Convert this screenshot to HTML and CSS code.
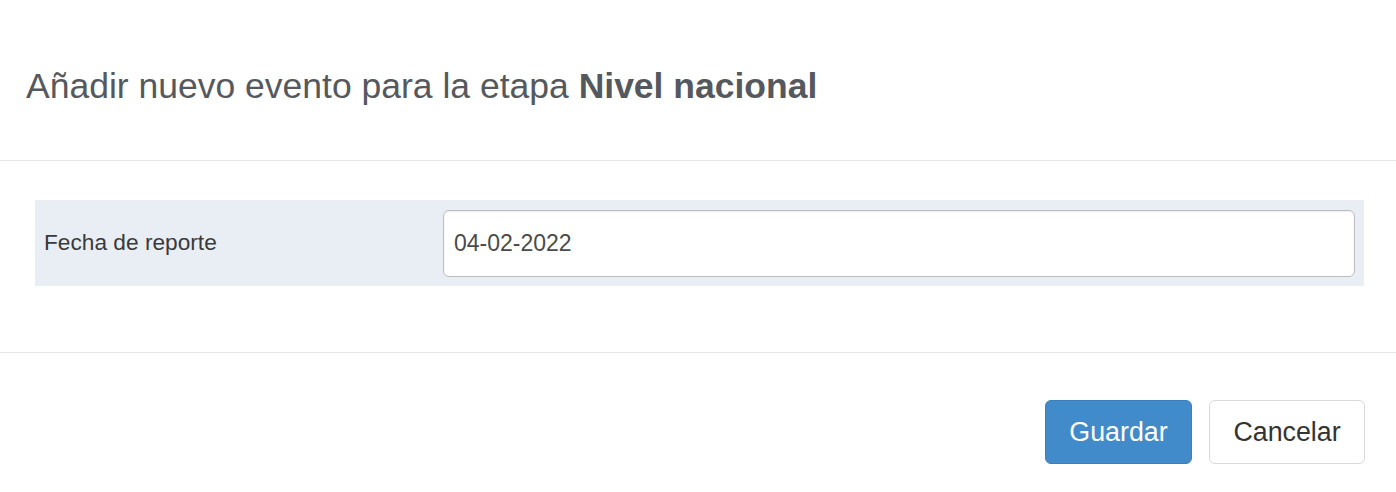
FILE: index.html
```html
<!DOCTYPE html>
<html lang="es">
<head>
<meta charset="utf-8">
<title>Añadir nuevo evento</title>
<link rel="stylesheet" href="styles.css">
</head>
<body>
<div class="modal">
  <div class="modal-header">
    <h4 class="modal-title">Añadir nuevo evento para la etapa <strong>Nivel nacional</strong></h4>
  </div>
  <div class="modal-body">
    <div class="form-row">
      <label class="form-label" for="fecha">Fecha de reporte</label>
      <div class="form-field">
        <input id="fecha" class="form-input" type="text" value="04-02-2022">
      </div>
    </div>
  </div>
  <div class="modal-footer">
    <button class="btn btn-primary" type="button">Guardar</button>
    <button class="btn btn-default" type="button">Cancelar</button>
  </div>
</div>
</body>
</html>
```
FILE: styles.css
```css
* { box-sizing: border-box; }
html, body { margin: 0; padding: 0; background: #fff; }
body {
  font-family: "Liberation Sans", Arial, sans-serif;
  color: #333;
  width: 1396px;
  height: 492px;
  overflow: hidden;
}
.modal { width: 1396px; }
.modal-header {
  height: 161px;
  padding: 67px 26px 0;
  border-bottom: 1px solid #e5e5e5;
}
.modal-title {
  margin: 0;
  font-size: 35.5px;
  line-height: 1.1;
  font-weight: normal;
  color: #55595e;
  white-space: nowrap;
}
.modal-title strong { font-weight: bold; }
.modal-body {
  height: 192px;
  padding: 39px 32px 0 35px;
  border-bottom: 1px solid #e5e5e5;
}
.form-row {
  display: flex;
  align-items: center;
  height: 86px;
  background: #e9eef5;
  padding: 0 9px;
}
.form-label {
  width: 399px;
  font-size: 22.7px;
  color: #3a3a3a;
  padding-bottom: 2px;
}
.form-field { flex: 1; }
.form-input {
  display: block;
  width: 100%;
  height: 67px;
  border: 1px solid #bdbdbd;
  border-radius: 6px;
  padding: 0 10px;
  font-family: "Liberation Sans", Arial, sans-serif;
  font-size: 23px;
  color: #4a4a4a;
  background: #fff;
  box-shadow: inset 0 1px 2px rgba(0,0,0,0.08);
}
.modal-footer {
  display: flex;
  justify-content: flex-end;
  gap: 17px;
  padding: 47px 31px 0 0;
}
.btn {
  height: 64px;
  border-radius: 6px;
  font-family: "Liberation Sans", Arial, sans-serif;
  font-size: 26.8px;
  padding: 0;
  cursor: pointer;
}
.btn-primary {
  background: #428bca;
  border: 1px solid #3a80bd;
  color: #fff;
  width: 147px;
}
.btn-default {
  background: #fff;
  border: 1px solid #d9d9d9;
  color: #333;
  width: 156px;
}
```
